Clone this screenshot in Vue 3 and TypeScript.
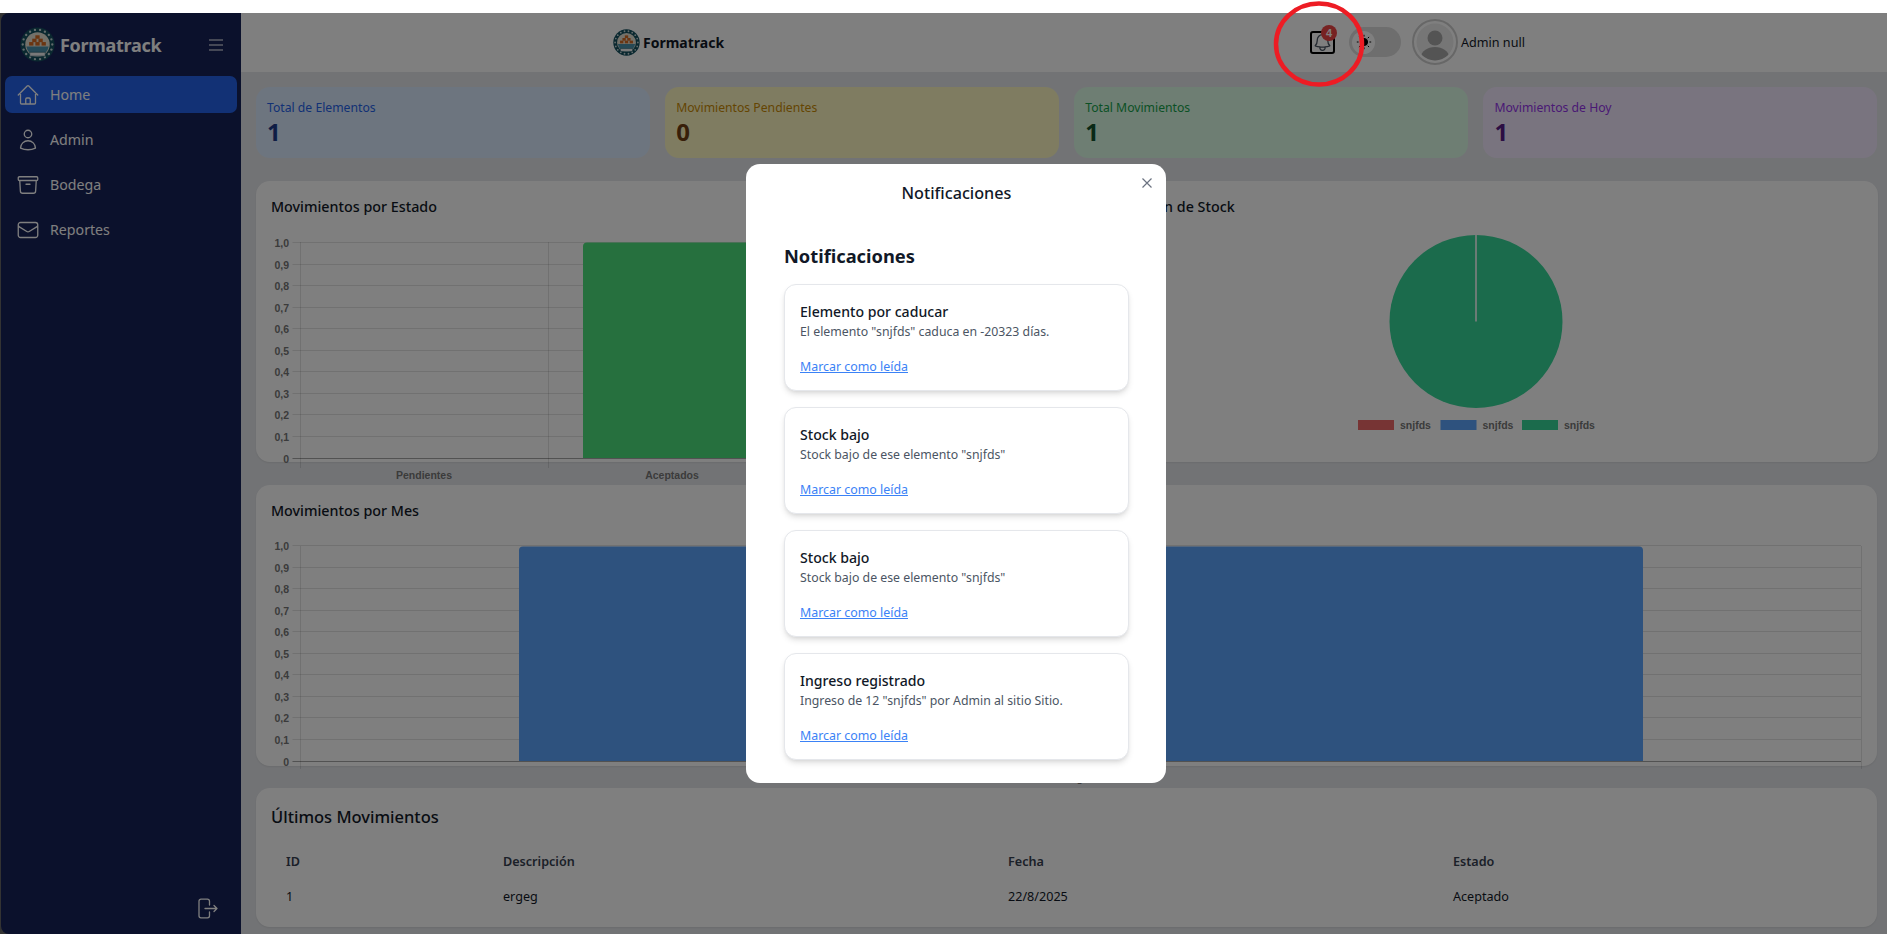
<script setup lang="ts">
const navItems = [
  { label: 'Home', active: true, paths: ['M2.25 12l8.954-8.955c.44-.439 1.152-.439 1.591 0L21.75 12M4.5 9.75v10.125c0 .621.504 1.125 1.125 1.125H9.75v-4.875c0-.621.504-1.125 1.125-1.125h2.25c.621 0 1.125.504 1.125 1.125V21h4.125c.621 0 1.125-.504 1.125-1.125V9.75M8.25 21h8.25'] },
  { label: 'Admin', active: false, paths: ['M15.75 6a3.75 3.75 0 11-7.5 0 3.75 3.75 0 017.5 0zM4.501 20.118a7.5 7.5 0 0114.998 0A17.933 17.933 0 0112 21.75c-2.676 0-5.216-.584-7.499-1.632z'] },
  { label: 'Bodega', active: false, paths: ['M20.25 7.5l-.625 10.632a2.25 2.25 0 01-2.247 2.118H6.622a2.25 2.25 0 01-2.247-2.118L3.75 7.5M10 11.25h4M3.375 7.5h17.25c.621 0 1.125-.504 1.125-1.125v-1.5c0-.621-.504-1.125-1.125-1.125H3.375c-.621 0-1.125.504-1.125 1.125v1.5c0 .621.504 1.125 1.125 1.125z'] },
  { label: 'Reportes', active: false, paths: ['M21.75 6.75v10.5a2.25 2.25 0 01-2.25 2.25h-15a2.25 2.25 0 01-2.25-2.25V6.75m19.5 0A2.25 2.25 0 0019.5 4.5h-15a2.25 2.25 0 00-2.25 2.25m19.5 0v.243a2.25 2.25 0 01-1.07 1.916l-7.5 4.615a2.25 2.25 0 01-2.36 0L3.32 8.91a2.25 2.25 0 01-1.07-1.916V6.75'] }
]

const stats = [
  { label: 'Total de Elementos', value: 1, tone: 'blue' },
  { label: 'Movimientos Pendientes', value: 0, tone: 'yellow' },
  { label: 'Total Movimientos', value: 1, tone: 'green' },
  { label: 'Movimientos de Hoy', value: 1, tone: 'purple' }
]

const notifications = [
  { title: 'Elemento por caducar', text: 'El elemento "snjfds" caduca en -20323 días.' },
  { title: 'Stock bajo', text: 'Stock bajo de ese elemento "snjfds"' },
  { title: 'Stock bajo', text: 'Stock bajo de ese elemento "snjfds"' },
  { title: 'Ingreso registrado', text: 'Ingreso de 12 "snjfds" por Admin al sitio Sitio.' }
]

const tickLabels = ['1,0', '0,9', '0,8', '0,7', '0,6', '0,5', '0,4', '0,3', '0,2', '0,1', '0']
const ticks = tickLabels.map((label, i) => ({ label, y: Math.round(10 + i * 21.55) + 0.5 }))

const legend = [
  { x: 268, color: '#ef6969' },
  { x: 350.5, color: '#5ca4fc' },
  { x: 432, color: '#36d698' }
]

const logoDots = Array.from({ length: 18 }, (_, i) => {
  const a = (i / 18) * Math.PI * 2
  return { x: 18 + Math.cos(a) * 15.2, y: 18 + Math.sin(a) * 15.2 }
})
const logoBoxes = [
  [15.8, 8.5], [12.6, 12], [19, 12], [9.4, 15.5], [15.8, 15.5], [22.2, 15.5]
]
</script>

<template>
  <div class="page">
    <svg class="defs" width="0" height="0" aria-hidden="true">
      <symbol id="logo-mark" viewBox="0 0 36 36">
        <circle cx="18" cy="18" r="17.6" fill="#14505f" />
        <circle v-for="(d, i) in logoDots" :key="i" :cx="d.x" :cy="d.y" r="1.2" fill="#c6d6d8" />
        <circle cx="18" cy="18" r="12.6" fill="#e6e2d4" />
        <path d="M6.5 20h23a11.6 11.6 0 0 1-23 0z" fill="#4d93ad" />
        <rect v-for="(b, i) in logoBoxes" :key="'b' + i" :x="b[0]" :y="b[1]" width="4.4" height="3.6" fill="#d66a22" />
        <rect x="10" y="26" width="16" height="4" rx="0.5" fill="#f2f2f2" stroke="#14505f" stroke-width="0.6" />
      </symbol>
    </svg>

    <div class="app">
      <aside class="sidebar">
        <div class="brand">
          <svg class="brand-logo" width="35" height="35"><use href="#logo-mark" /></svg>
          <span class="brand-name">Formatrack</span>
          <svg class="burger" width="14" height="12" viewBox="0 0 14 12" fill="none" stroke="#fff" stroke-width="1">
            <path d="M0 1h14M0 6h14M0 11h14" />
          </svg>
        </div>
        <nav class="nav">
          <a v-for="item in navItems" :key="item.label" class="nav-item" :class="{ active: item.active }">
            <svg width="24" height="24" viewBox="0 0 24 24" fill="none" stroke="#fff" stroke-width="1.3" stroke-linecap="round" stroke-linejoin="round">
              <path v-for="p in item.paths" :key="p" :d="p" />
            </svg>
            <span>{{ item.label }}</span>
          </a>
        </nav>
        <div class="logout">
          <svg width="20" height="21" viewBox="0 0 20 21" fill="none" stroke="#fff" stroke-width="1.3" stroke-linecap="round" stroke-linejoin="round">
            <path d="M11.5 7V3.2a2 2 0 0 0-2-2H3a2 2 0 0 0-2 2v14.6a2 2 0 0 0 2 2h6.5a2 2 0 0 0 2-2V14" />
            <path d="M7 10.5h12M16 7.5l3 3-3 3" />
          </svg>
        </div>
      </aside>

      <div class="main">
        <header class="topbar">
          <div class="top-brand">
            <svg width="27" height="27"><use href="#logo-mark" /></svg>
            <span>Formatrack</span>
          </div>
          <div class="top-actions">
            <button class="bell" type="button">
              <svg width="21" height="21" viewBox="0 0 24 24" fill="none" stroke="#4b5563" stroke-width="1.5" stroke-linecap="round" stroke-linejoin="round">
                <path d="M14.857 17.082a23.848 23.848 0 005.454-1.31A8.967 8.967 0 0118 9.75v-.7V9A6 6 0 006 9v.75a8.967 8.967 0 01-2.312 6.022c1.733.64 3.56 1.085 5.455 1.31m5.714 0a24.255 24.255 0 01-5.714 0m5.714 0a3 3 0 11-5.714 0" />
              </svg>
              <span class="badge">4</span>
            </button>
            <div class="toggle">
              <span class="knob">
                <svg width="16" height="16" viewBox="0 0 16 16" fill="#000" stroke="#000" stroke-width="1">
                  <circle cx="8" cy="8" r="3.6" />
                  <path d="M8 .8v1.8M8 13.4v1.8M.8 8h1.8M13.4 8h1.8M2.9 2.9l1.3 1.3M11.8 11.8l1.3 1.3M2.9 13.1l1.3-1.3M11.8 4.2l1.3-1.3" />
                </svg>
              </span>
            </div>
            <svg class="avatar" width="46" height="46" viewBox="0 0 46 46">
              <defs>
                <clipPath id="avatar-clip"><circle cx="23" cy="23" r="18.5" /></clipPath>
              </defs>
              <circle cx="23" cy="23" r="22" fill="#fff" stroke="#cfcfcf" stroke-width="2" />
              <circle cx="23" cy="23" r="18.5" fill="#ececec" />
              <g clip-path="url(#avatar-clip)" fill="#a8a8a8">
                <circle cx="23" cy="19" r="7.5" />
                <ellipse cx="23" cy="38" rx="14" ry="10" />
              </g>
            </svg>
            <span class="user">Admin null</span>
          </div>
        </header>

        <main class="content">
          <section class="stats">
            <div v-for="s in stats" :key="s.label" class="stat" :class="s.tone">
              <div class="stat-label">{{ s.label }}</div>
              <div class="stat-value">{{ s.value }}</div>
            </div>
          </section>

          <section class="charts">
            <div class="card chart-card">
              <h3>Movimientos por Estado</h3>
              <svg class="chart" width="773" height="256">
                <g v-for="t in ticks" :key="t.label">
                  <path :d="`M21.5 ${t.y}H773`" class="grid" />
                  <text x="18" :y="t.y + 4" text-anchor="end" class="tick">{{ t.label }}</text>
                </g>
                <path d="M29.5 10V236M277.5 10V236M525.5 10V236M772.5 10V236" class="grid" />
                <path d="M21.5 226.5H773" class="axis" />
                <path d="M312 226V14.5a4 4 0 0 1 4-4H486a4 4 0 0 1 4 4V226z" fill="#4ce07c" />
                <text x="153" y="247" text-anchor="middle" class="tick">Pendientes</text>
                <text x="401" y="247" text-anchor="middle" class="tick">Aceptados</text>
                <text x="649" y="247" text-anchor="middle" class="tick">Rechazados</text>
              </svg>
            </div>
            <div class="card chart-card">
              <h3>Distribución de Stock</h3>
              <svg class="chart" width="773" height="210">
                <circle cx="386" cy="89.5" r="86.5" fill="#36d698" />
                <path d="M386 3V89.5" stroke="#fff" stroke-width="1.6" />
                <g v-for="l in legend" :key="l.x">
                  <rect :x="l.x" y="188" width="36" height="10" :fill="l.color" />
                  <text :x="l.x + 42" y="197" class="tick">snjfds</text>
                </g>
              </svg>
            </div>
          </section>

          <section class="card chart-card wide">
            <h3>Movimientos por Mes</h3>
            <svg class="chart" width="1592" height="256">
              <g v-for="t in ticks" :key="t.label">
                <path :d="`M21.5 ${t.y - 1}H1590`" class="grid" />
                <text x="18" :y="t.y + 3" text-anchor="end" class="tick">{{ t.label }}</text>
              </g>
              <path d="M29.5 10V233M1590.5 10V233" class="grid" />
              <path d="M21.5 225.5H1590" class="axis" />
              <path d="M248 225V14.5a4 4 0 0 1 4-4H1368a4 4 0 0 1 4 4V225z" fill="#5ca4fc" />
              <text x="809" y="246" text-anchor="middle" class="tick">ago</text>
            </svg>
          </section>

          <section class="card table-card">
            <h3 class="table-title">Últimos Movimientos</h3>
            <table>
              <colgroup>
                <col style="width: 217px" />
                <col style="width: 505px" />
                <col style="width: 445px" />
                <col />
              </colgroup>
              <thead>
                <tr><th>ID</th><th>Descripción</th><th>Fecha</th><th>Estado</th></tr>
              </thead>
              <tbody>
                <tr><td>1</td><td>ergeg</td><td>22/8/2025</td><td>Aceptado</td></tr>
              </tbody>
            </table>
          </section>
        </main>
      </div>

      <div class="overlay">
        <div class="modal">
          <button class="close" type="button" aria-label="Cerrar">
            <svg width="12" height="12" viewBox="0 0 12 12" fill="none" stroke="#6b7280" stroke-width="1.2">
              <path d="M1.5 1.5l9 9M10.5 1.5l-9 9" />
            </svg>
          </button>
          <div class="modal-title">Notificaciones</div>
          <div class="modal-body">
            <h2>Notificaciones</h2>
            <div class="notes">
              <article v-for="(n, i) in notifications" :key="i" class="note">
                <div class="note-title">{{ n.title }}</div>
                <p class="note-text">{{ n.text }}</p>
                <a class="note-link">Marcar como leída</a>
              </article>
            </div>
          </div>
        </div>
      </div>
    </div>

    <svg class="marker" width="100" height="90" viewBox="0 0 100 90" fill="none">
      <ellipse cx="50" cy="44" rx="43" ry="40.5" stroke="#ed1c24" stroke-width="4.5" />
    </svg>
  </div>
</template>

<style>
html, body { margin: 0; overflow: hidden; background: #fff; }
</style>

<style scoped>
* { box-sizing: border-box; }
.page {
  position: relative;
  height: 934px;
  padding-top: 13px;
  background: #fff;
  font-family: "Noto Sans", "Open Sans", sans-serif;
  color: #111827;
  overflow: hidden;
}
.defs { position: absolute; }
.app {
  position: relative;
  display: flex;
  height: 921px;
  background: #666;
}
.sidebar {
  width: 240px;
  margin-left: 1px;
  display: flex;
  flex-direction: column;
  background: #172258;
  border-radius: 8px 0 0 8px;
  color: #fff;
}
.brand {
  display: flex;
  align-items: center;
  height: 63px;
  padding: 0 18px 0 19px;
}
.brand-name {
  margin-left: 5px;
  font-size: 18px;
  font-weight: 700;
  letter-spacing: -0.3px;
}
.burger { margin-left: auto; }
.nav { display: flex; flex-direction: column; gap: 8px; padding: 0 4px; }
.nav-item {
  display: flex;
  align-items: center;
  gap: 10px;
  height: 37px;
  padding-left: 11px;
  border-radius: 7px;
  font-size: 14.2px;
}
.nav-item span { padding-bottom: 1px; }
.nav-item.active { background: #2563eb; }
.logout {
  margin-top: auto;
  align-self: flex-end;
  padding: 0 23px 15px 0;
}
.logout svg { display: block; }
.main {
  flex: 1;
  min-width: 0;
  display: flex;
  flex-direction: column;
  background: #e5e7eb;
}
.topbar {
  position: relative;
  height: 59px;
  flex: none;
  background: #fff;
}
.top-brand {
  position: absolute;
  left: 372px;
  top: 16px;
  display: flex;
  align-items: center;
  gap: 3px;
  font-size: 14px;
  font-weight: 700;
}
.top-brand svg { display: block; }
.top-actions {
  position: absolute;
  left: 1069px;
  top: 6px;
  display: flex;
  align-items: center;
  height: 46px;
}
.bell {
  position: relative;
  width: 25px;
  height: 23px;
  padding: 0;
  display: flex;
  align-items: center;
  justify-content: center;
  background: none;
  border: 2px solid #000;
  border-radius: 3px;
}
.badge {
  position: absolute;
  left: 9px;
  top: -8px;
  width: 16px;
  height: 16px;
  border-radius: 50%;
  background: #ef4444;
  color: #fff;
  font-size: 11px;
  font-weight: 700;
  line-height: 16px;
  text-align: center;
}
.toggle {
  display: flex;
  align-items: center;
  width: 52px;
  height: 30px;
  margin-left: 14px;
  padding-left: 3px;
  border-radius: 15px;
  background: #dcdcdc;
}
.knob {
  display: flex;
  align-items: center;
  justify-content: center;
  width: 23px;
  height: 23px;
  border-radius: 50%;
  background: #fff;
}
.avatar { margin-left: 11px; display: block; }
.user { margin-left: 3px; font-size: 12.6px; }
.content {
  flex: 1;
  padding: 15px 10px 0 15px;
  display: flex;
  flex-direction: column;
}
.stats {
  display: grid;
  grid-template-columns: repeat(4, 1fr);
  gap: 15.5px;
}
.stat {
  height: 71px;
  padding: 12px 11px;
  border-radius: 14px;
}
.stat-label { font-size: 12.2px; line-height: 18px; }
.stat-value { font-size: 24px; line-height: 30px; font-weight: 700; }
.stat.blue { background: #dbeafe; } .blue .stat-label { color: #2563eb; } .blue .stat-value { color: #1e3a8a; }
.stat.yellow { background: #fef9c3; } .yellow .stat-label { color: #ca8a04; } .yellow .stat-value { color: #713f12; }
.stat.green { background: #dcfce7; } .green .stat-label { color: #16a34a; } .green .stat-value { color: #14532d; }
.stat.purple { background: #f3e8ff; } .purple .stat-label { color: #9333ea; } .purple .stat-value { color: #581c87; }
.charts {
  display: grid;
  grid-template-columns: 1fr 1fr;
  gap: 16px;
  margin-top: 23px;
}
.card {
  background: #fff;
  border-radius: 14px;
  box-shadow: 0 1px 2px rgba(0, 0, 0, 0.08);
}
.chart-card { height: 281px; padding: 15px 15px 0; }
.chart-card h3 {
  margin: 0;
  height: 36px;
  font-size: 14.3px;
  line-height: 22px;
  font-weight: 500;
}
.chart { display: block; overflow: visible; }
.wide { margin-top: 23px; }
.grid { stroke: rgba(0, 0, 0, 0.11); stroke-width: 1; fill: none; }
.axis { stroke: rgba(0, 0, 0, 0.28); stroke-width: 1; fill: none; }
.tick { font: bold 10.5px "Liberation Sans", sans-serif; fill: #777; }
.table-card { height: 139px; margin-top: 22px; padding: 17px 15px 0; }
.table-title {
  margin: 0;
  font-size: 16.5px;
  line-height: 24px;
  font-weight: 500;
}
table {
  width: 100%;
  margin-top: 15px;
  table-layout: fixed;
  border-collapse: collapse;
  font-size: 12.6px;
}
th, td { height: 35px; padding: 0 0 0 15px; text-align: left; }
th { color: #374151; font-weight: 600; }
.overlay {
  position: absolute;
  inset: 0;
  display: flex;
  align-items: center;
  justify-content: center;
  padding-left: 25px;
  background: rgba(0, 0, 0, 0.5);
}
.modal {
  position: relative;
  width: 420px;
  height: 619px;
  padding: 17px 37px 0 38px;
  background: #fff;
  border-radius: 14px;
}
.close {
  position: absolute;
  top: 13px;
  right: 13px;
  padding: 0;
  background: none;
  border: 0;
  line-height: 0;
}
.modal-title {
  text-align: center;
  font-size: 16.2px;
  line-height: 24px;
  font-weight: 500;
}
.modal-body { margin-top: 37px; }
.modal-body h2 {
  margin: 0 0 14px;
  font-size: 18.3px;
  line-height: 28px;
  font-weight: 700;
}
.notes { display: flex; flex-direction: column; gap: 16px; }
.note {
  height: 107px;
  padding: 17px 15px 0;
  border: 1px solid #e5e7eb;
  border-radius: 12px;
  background: #fff;
  box-shadow: 0 4px 6px -1px rgba(0, 0, 0, 0.12), 0 2px 4px -2px rgba(0, 0, 0, 0.1);
}
.note-title { font-size: 14.1px; line-height: 20px; font-weight: 500; }
.note-text { margin: 0; font-size: 12.3px; line-height: 20px; color: #4b5563; }
.note-link {
  display: inline-block;
  margin-top: 14.5px;
  font-size: 12.4px;
  line-height: 20px;
  color: #3b82f6;
  text-decoration: underline;
}
.marker { position: absolute; left: 1269px; top: 0; }
</style>
